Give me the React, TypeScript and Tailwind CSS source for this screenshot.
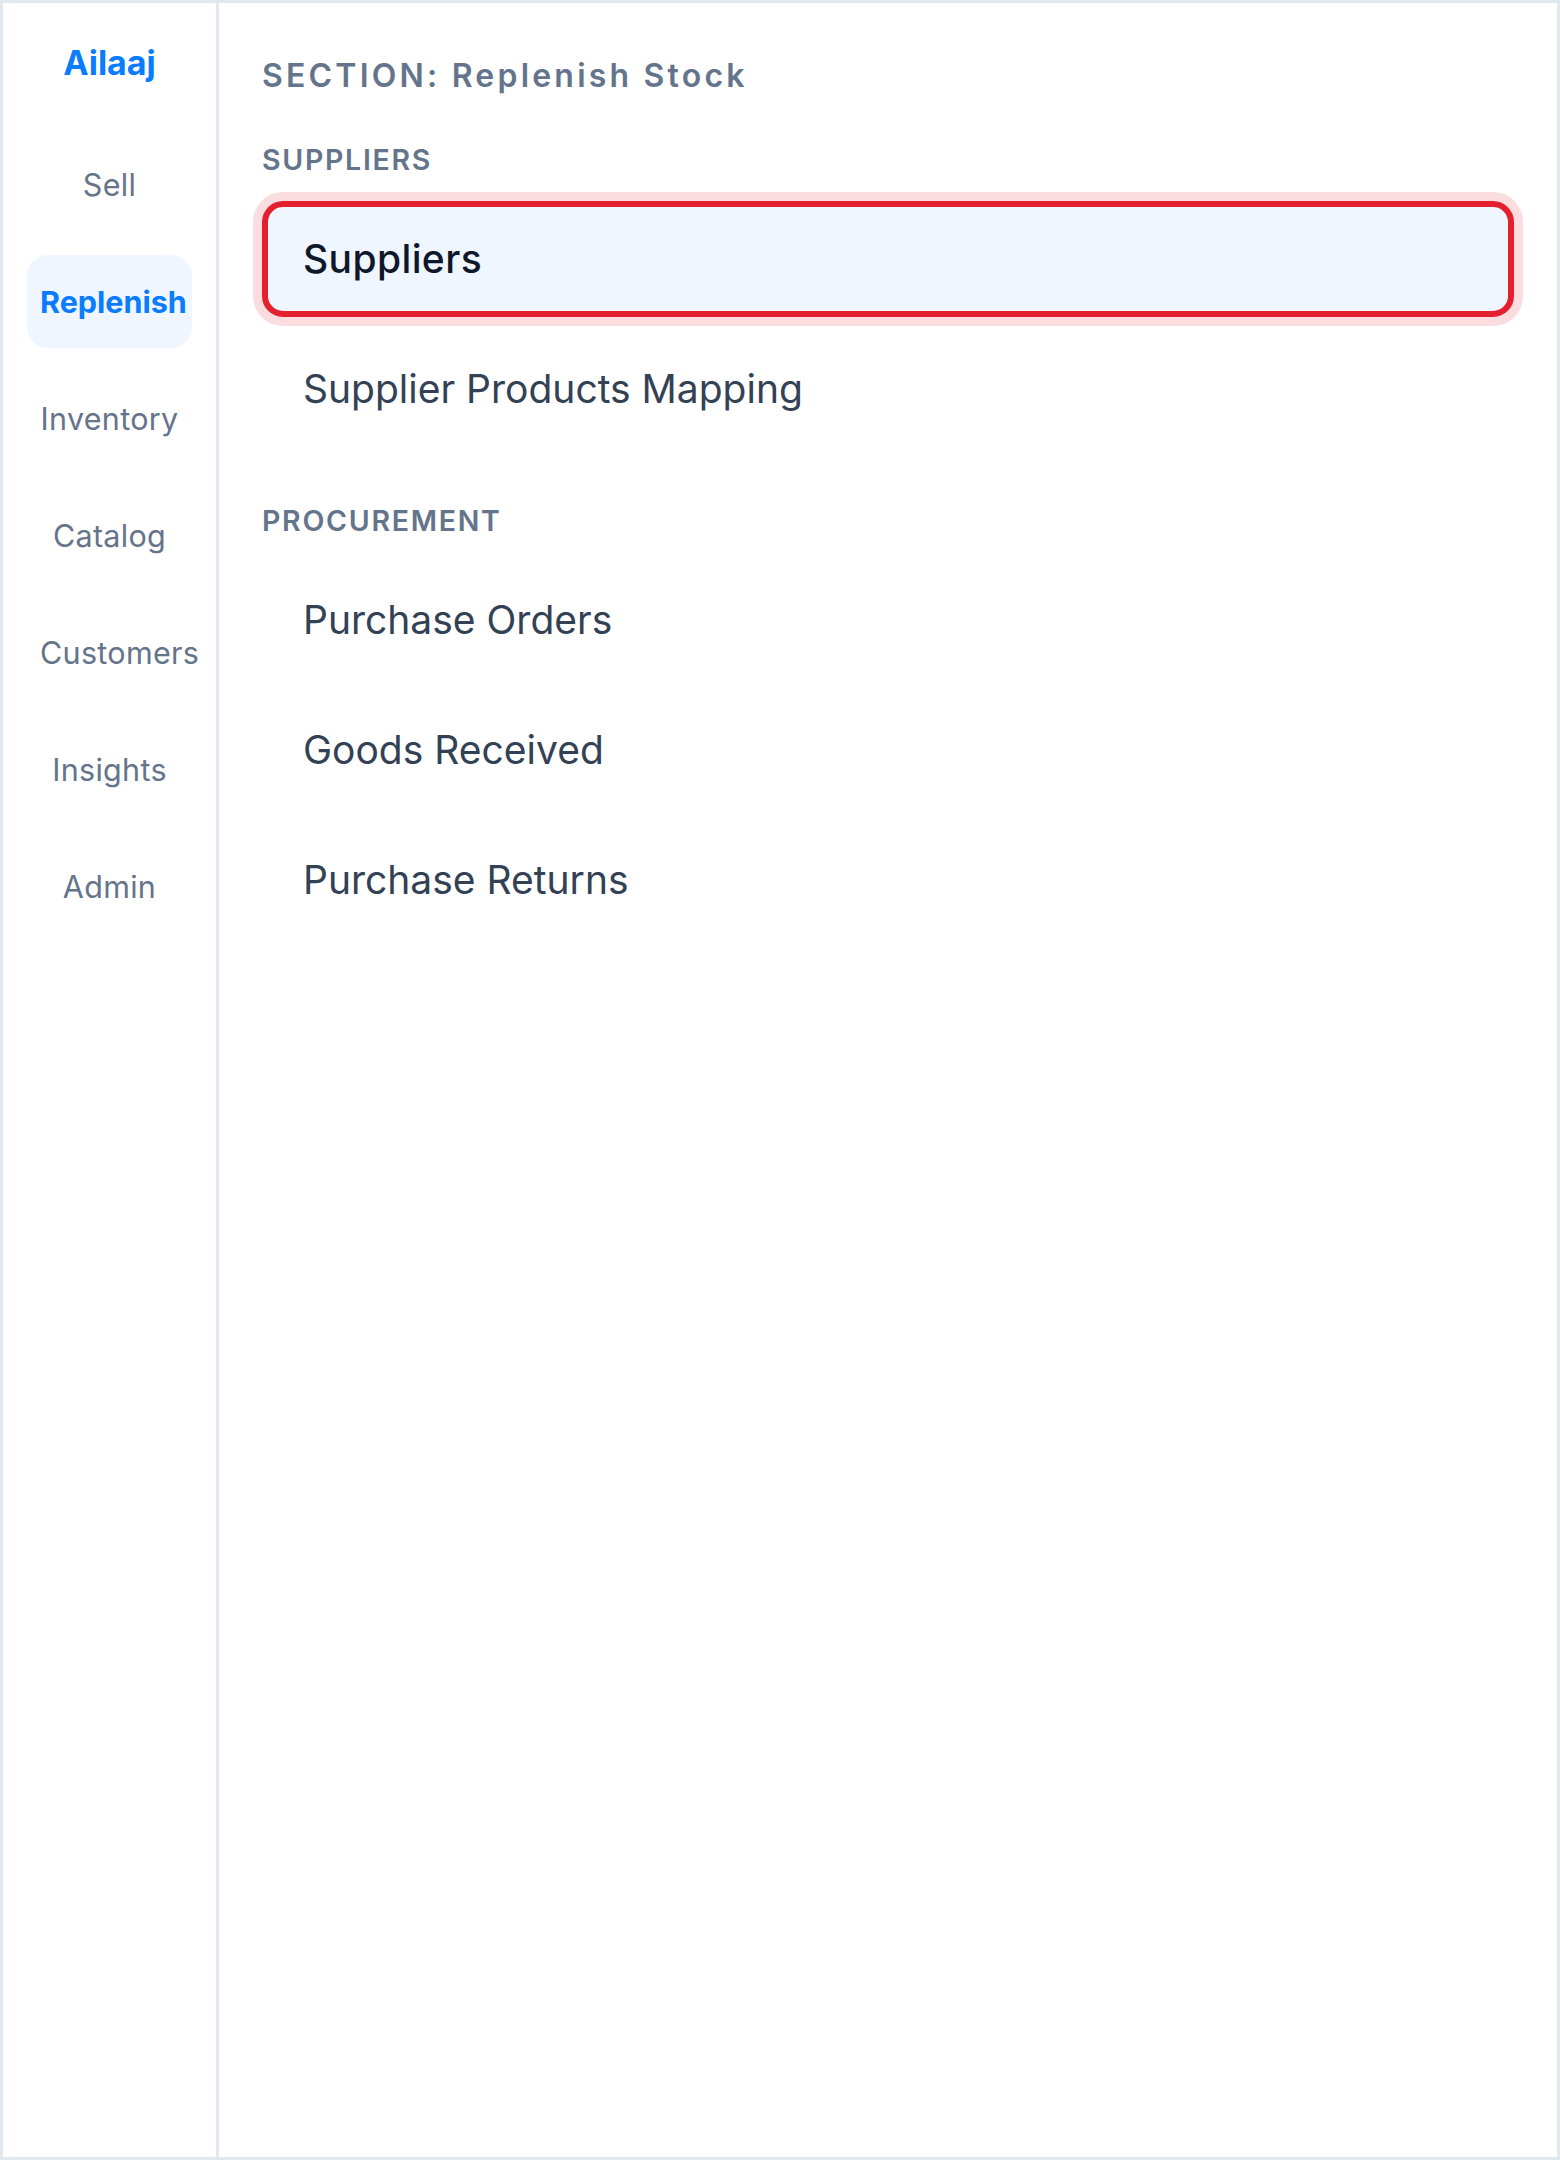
const navItems = ['Sell', 'Replenish', 'Inventory', 'Catalog', 'Customers', 'Insights', 'Admin'];

const groups = [
  { label: 'SUPPLIERS', items: ['Suppliers', 'Supplier Products Mapping'] },
  { label: 'PROCUREMENT', items: ['Purchase Orders', 'Goods Received', 'Purchase Returns'] },
];

const Sidebar = () => {
  return (
    <aside className="w-[216px] shrink-0 border-r-[3px] border-[#e2e8f0] flex flex-col items-center pt-[37px]">
      <div className="text-[34px] leading-[45px] font-bold text-[#0a7cff]">Ailaaj</div>
      <nav className="mt-[53px] flex flex-col gap-[24px]">
        {navItems.map((item) => {
          const active = item === 'Replenish';
          return (
            <div
              key={item}
              className={
                active
                  ? 'w-[165px] h-[93px] rounded-[21px] px-[13px] bg-[#eff6ff] text-center leading-[93px] whitespace-nowrap text-[30.5px] font-bold text-[#0a7cff]'
                  : 'w-[165px] h-[93px] rounded-[21px] px-[13px] text-center leading-[93px] whitespace-nowrap text-[30.5px] tracking-[0.01em] text-[#64748b]'
              }
            >
              {item}
            </div>
          );
        })}
      </nav>
    </aside>
  );
};

const App = () => {
  return (
    <div
      className="w-[1560px] h-[2160px] flex bg-white border-[3px] border-[#e2e8f0]"
      style={{ fontFamily: 'Inter, "Noto Sans", sans-serif' }}
    >
      <Sidebar />

      <main className="flex-1 px-[43px] pt-[50px]">
        {/* Header */}
        <h1 className="text-[32px] leading-[45px] font-semibold tracking-[0.1em] text-[#64748b]">
          SECTION: Replenish Stock
        </h1>

        {groups.map((group, i) => (
          <section key={group.label} className={i === 0 ? 'mt-[44px]' : 'mt-[56px]'}>
            <h2 className="text-[28.5px] leading-[36px] font-semibold tracking-[0.06em] text-[#64748b]">
              {group.label}
            </h2>
            <div className="mt-[23px] flex flex-col gap-[14px]">
              {group.items.map((item) => {
                const selected = item === 'Suppliers';
                return (
                  <div
                    key={item}
                    className={
                      selected
                        ? 'h-[116px] rounded-[21px] border-[6px] border-[#e5202e] ring-[9px] ring-[#fbdde0] bg-[#eff6ff] pl-[35px] flex items-center text-[39px] font-medium tracking-[0.01em] text-[#0f172a]'
                        : 'h-[116px] rounded-[21px] border-[6px] border-transparent pl-[35px] flex items-center text-[39px] text-[#334155]'
                    }
                  >
                    {item}
                  </div>
                );
              })}
            </div>
          </section>
        ))}
      </main>
    </div>
  );
};

export default App;
